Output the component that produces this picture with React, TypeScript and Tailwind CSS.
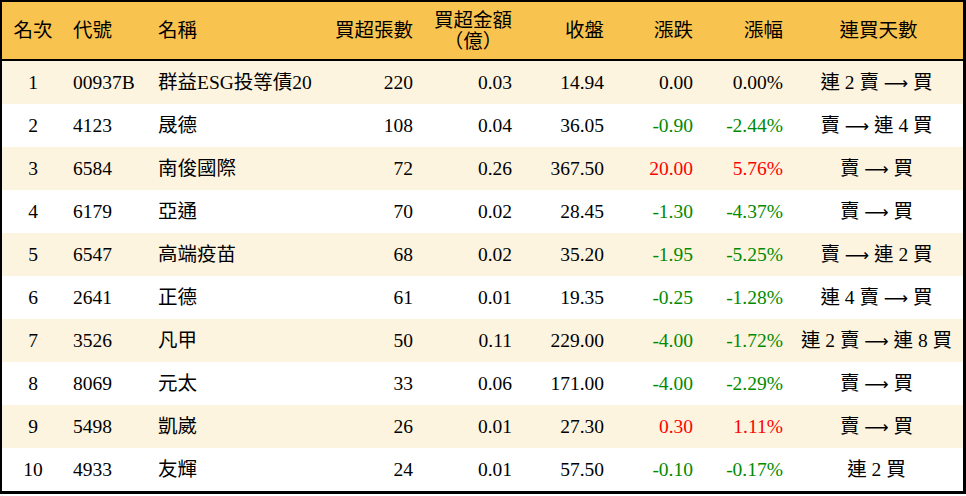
const rows = [
  { rank: 1, code: "00937B", name: "群益ESG投等債20", lots: 220, amount: "0.03", close: "14.94", change: "0.00", pct: "0.00%", streak: "連 2 賣 → 買" },
  { rank: 2, code: "4123", name: "晟德", lots: 108, amount: "0.04", close: "36.05", change: "-0.90", pct: "-2.44%", streak: "賣 → 連 4 買" },
  { rank: 3, code: "6584", name: "南俊國際", lots: 72, amount: "0.26", close: "367.50", change: "20.00", pct: "5.76%", streak: "賣 → 買" },
  { rank: 4, code: "6179", name: "亞通", lots: 70, amount: "0.02", close: "28.45", change: "-1.30", pct: "-4.37%", streak: "賣 → 買" },
  { rank: 5, code: "6547", name: "高端疫苗", lots: 68, amount: "0.02", close: "35.20", change: "-1.95", pct: "-5.25%", streak: "賣 → 連 2 買" },
  { rank: 6, code: "2641", name: "正德", lots: 61, amount: "0.01", close: "19.35", change: "-0.25", pct: "-1.28%", streak: "連 4 賣 → 買" },
  { rank: 7, code: "3526", name: "凡甲", lots: 50, amount: "0.11", close: "229.00", change: "-4.00", pct: "-1.72%", streak: "連 2 賣 → 連 8 買" },
  { rank: 8, code: "8069", name: "元太", lots: 33, amount: "0.06", close: "171.00", change: "-4.00", pct: "-2.29%", streak: "賣 → 買" },
  { rank: 9, code: "5498", name: "凱崴", lots: 26, amount: "0.01", close: "27.30", change: "0.30", pct: "1.11%", streak: "賣 → 買" },
  { rank: 10, code: "4933", name: "友輝", lots: 24, amount: "0.01", close: "57.50", change: "-0.10", pct: "-0.17%", streak: "連 2 買" },
];

const cols =
  "grid grid-cols-[62px_86px_180px_90px_100px_92px_88px_90px_173px] items-center";

// red for up, green for down, black for flat
const tone = (v: string) =>
  v.startsWith("-") ? "text-[#008a00]" : parseFloat(v) > 0 ? "text-[#ff0000]" : "text-black";

// the arrow in the streak text is long and thin in the original, so give it its own font
const Streak = ({ text }: { text: string }) => {
  const parts = text.split("→");
  return (
    <>
      {parts[0]}
      {parts.length > 1 && (
        <>
          <span className="text-[17px]" style={{ fontFamily: '"DejaVu Sans", sans-serif' }}>
            ⟶
          </span>
          {parts[1]}
        </>
      )}
    </>
  );
};

export default function App() {
  return (
    <div
      className="w-[966px] h-[496px] bg-white text-black text-[19.5px]"
      style={{ fontFamily: '"Liberation Serif", "Noto Sans CJK TC", serif' }}
    >
      <div className="border-2 border-r-[3px] border-b-[3px] border-black">
        {/* header */}
        <div className={`${cols} h-[59px] bg-[#f9c350] border-b-2 border-black leading-[21px]`}>
          <div className="text-center">名次</div>
          <div className="pl-[9px]">代號</div>
          <div className="pl-[8px]">名稱</div>
          <div className="text-right pr-[7px]">買超張數</div>
          <div className="text-right pr-[8px]">
            <span className="inline-block text-center">
              買超金額
              <br />
              （億）
            </span>
          </div>
          <div className="text-right pr-[8px]">收盤</div>
          <div className="text-right pr-[7px]">漲跌</div>
          <div className="text-right pr-[7px]">漲幅</div>
          <div className="text-center pl-[4px]">連買天數</div>
        </div>

        {/* rows */}
        {rows.map((r, i) => (
          <div
            key={r.code}
            className={`${cols} h-[43px] ${i % 2 === 0 ? "bg-[#fdf4e0]" : "bg-white"}`}
          >
            <div className="text-center">{r.rank}</div>
            <div className="pl-[9px]">{r.code}</div>
            <div className="pl-[8px]">{r.name}</div>
            <div className="text-right pr-[7px]">{r.lots}</div>
            <div className="text-right pr-[8px]">{r.amount}</div>
            <div className="text-right pr-[8px]">{r.close}</div>
            <div className={`text-right pr-[7px] ${tone(r.change)}`}>{r.change}</div>
            <div className={`text-right pr-[7px] ${tone(r.pct)}`}>{r.pct}</div>
            <div className="text-center">
              <Streak text={r.streak} />
            </div>
          </div>
        ))}
      </div>
    </div>
  );
}
